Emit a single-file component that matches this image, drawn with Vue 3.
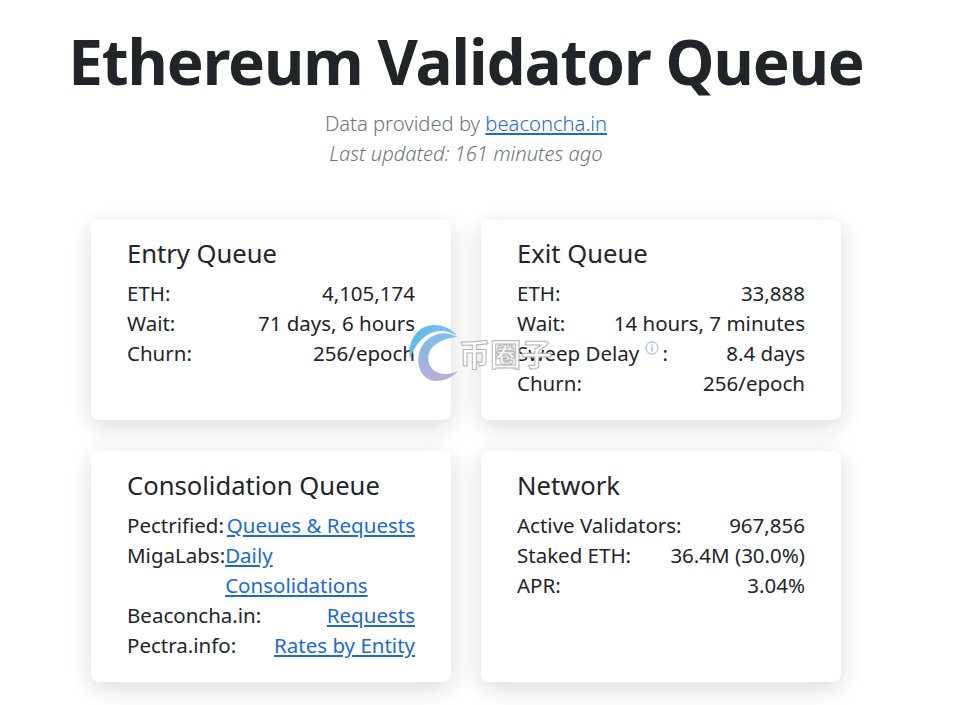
<script setup>
const entry = [
  { label: "ETH:", value: "4,105,174" },
  { label: "Wait:", value: "71 days, 6 hours" },
  { label: "Churn:", value: "256/epoch" }
];
const exit = [
  { label: "ETH:", value: "33,888" },
  { label: "Wait:", value: "14 hours, 7 minutes" },
  { label: "Sweep Delay", info: true, value: "8.4 days" },
  { label: "Churn:", value: "256/epoch" }
];
const consolidation = [
  { label: "Pectrified:", link: "Queues & Requests" },
  { label: "MigaLabs:", link: "Daily Consolidations", wrap: true },
  { label: "Beaconcha.in:", link: "Requests" },
  { label: "Pectra.info:", link: "Rates by Entity" }
];
const network = [
  { label: "Active Validators:", value: "967,856" },
  { label: "Staked ETH:", value: "36.4M (30.0%)" },
  { label: "APR:", value: "3.04%" }
];
const cards = [
  { title: "Entry Queue", rows: entry },
  { title: "Exit Queue", rows: exit },
  { title: "Consolidation Queue", rows: consolidation },
  { title: "Network", rows: network }
];
</script>

<template>
  <div class="page">
    <h1 class="title">Ethereum Validator Queue</h1>
    <p class="lead">Data provided by <a href="#">beaconcha.in</a></p>
    <p class="lead updated">Last updated: 161 minutes ago</p>

    <div class="grid">
      <div v-for="card in cards" :key="card.title" class="card">
        <h2>{{ card.title }}</h2>
        <div v-for="row in card.rows" :key="row.label" class="row">
          <span class="label">
            {{ row.label }}
            <template v-if="row.info">
              <svg class="info" viewBox="0 0 16 16" width="14" height="14">
                <circle cx="8" cy="8" r="7" fill="none" stroke="#6ea8e8" stroke-width="1" />
                <circle cx="8" cy="4.8" r="0.9" fill="#6ea8e8" />
                <path d="M8 7v5" stroke="#6ea8e8" stroke-width="1.3" fill="none" />
              </svg>
              <span class="colon">:</span>
            </template>
          </span>
          <a v-if="row.link" href="#" class="value" :class="{ wrap: row.wrap }">{{ row.link }}</a>
          <span v-else class="value">{{ row.value }}</span>
        </div>
      </div>
    </div>

    <div class="watermark">
      <svg viewBox="0 0 50 62" width="50" height="62">
        <defs>
          <linearGradient id="wmA" x1="0" y1="0" x2="1" y2="0.3">
            <stop offset="0" stop-color="#5fb4ea" />
            <stop offset="1" stop-color="#7cc8f2" />
          </linearGradient>
          <linearGradient id="wmB" x1="0" y1="0" x2="0" y2="1">
            <stop offset="0" stop-color="#7cc0ea" />
            <stop offset="0.5" stop-color="#9ab4dc" />
            <stop offset="1" stop-color="#b6b0da" />
          </linearGradient>
        </defs>
        <path d="M2 37C-1 22 8 3 26 3c10 0 18 4 23 11-8-5-16-6-23-4C15 13 6 24 2 37z" fill="url(#wmA)" />
        <path d="M49 15C39 9 28 10 19 18c-8 7-10 18-8 26 2 9 9 15 17 15 9 0 17-4 22-10-8 4-17 4-23 0-7-5-9-14-4-22 6-8 16-11 26-12z" fill="url(#wmB)" />
      </svg>
      <span class="wm-text">币圈子</span>
    </div>
  </div>
</template>

<style scoped>
.page {
  position: relative;
  width: 932px;
  height: 705px;
  overflow: hidden;
  font-family: "Noto Sans", "Open Sans", sans-serif;
  color: #212529;
  text-align: center;
}

.title {
  margin: 0;
  padding-top: 19px;
  font-size: 62px;
  line-height: 84px;
  font-weight: 700;
  letter-spacing: -1.1px;
  white-space: nowrap;
}

.lead {
  margin: 0;
  font-size: 20.2px;
  line-height: 30px;
  font-weight: 300;
  color: #6c757d;
}

.lead:first-of-type {
  padding-top: 5px;
}

.lead a {
  color: #1b6ad6;
}

.updated {
  font-style: italic;
}

.grid {
  display: grid;
  grid-template-columns: 360px 360px;
  grid-template-rows: 200px 231px;
  gap: 31px 30px;
  justify-content: center;
  margin-top: 52px;
  text-align: left;
}

.card {
  padding: 16px 36px;
  background: #fff;
  border-radius: 8px;
  box-shadow: 0 6px 24px rgba(0, 0, 0, 0.15);
}

.card:nth-child(n + 3) {
  padding-top: 17px;
}

.card h2 {
  margin: 0 0 6px;
  font-size: 25.6px;
  line-height: 36px;
  font-weight: 400;
}

.row {
  display: flex;
  justify-content: space-between;
  font-size: 20.5px;
  line-height: 30px;
}

.label {
  white-space: nowrap;
}

.value {
  text-align: right;
}

.value.wrap {
  text-align: left;
}

a {
  color: #1b6ad6;
}

.info {
  position: relative;
  top: -6px;
  margin-left: 0;
}

.colon {
  margin-left: 4px;
}

.watermark {
  position: absolute;
  left: 408px;
  top: 322px;
  display: flex;
  align-items: center;
  gap: 1px;
}

.wm-text {
  font-family: "Noto Sans CJK SC", sans-serif;
  font-size: 31px;
  font-weight: 700;
  line-height: 40px;
  color: #fff;
  -webkit-text-stroke: 1px #b4b4b4;
}
</style>
